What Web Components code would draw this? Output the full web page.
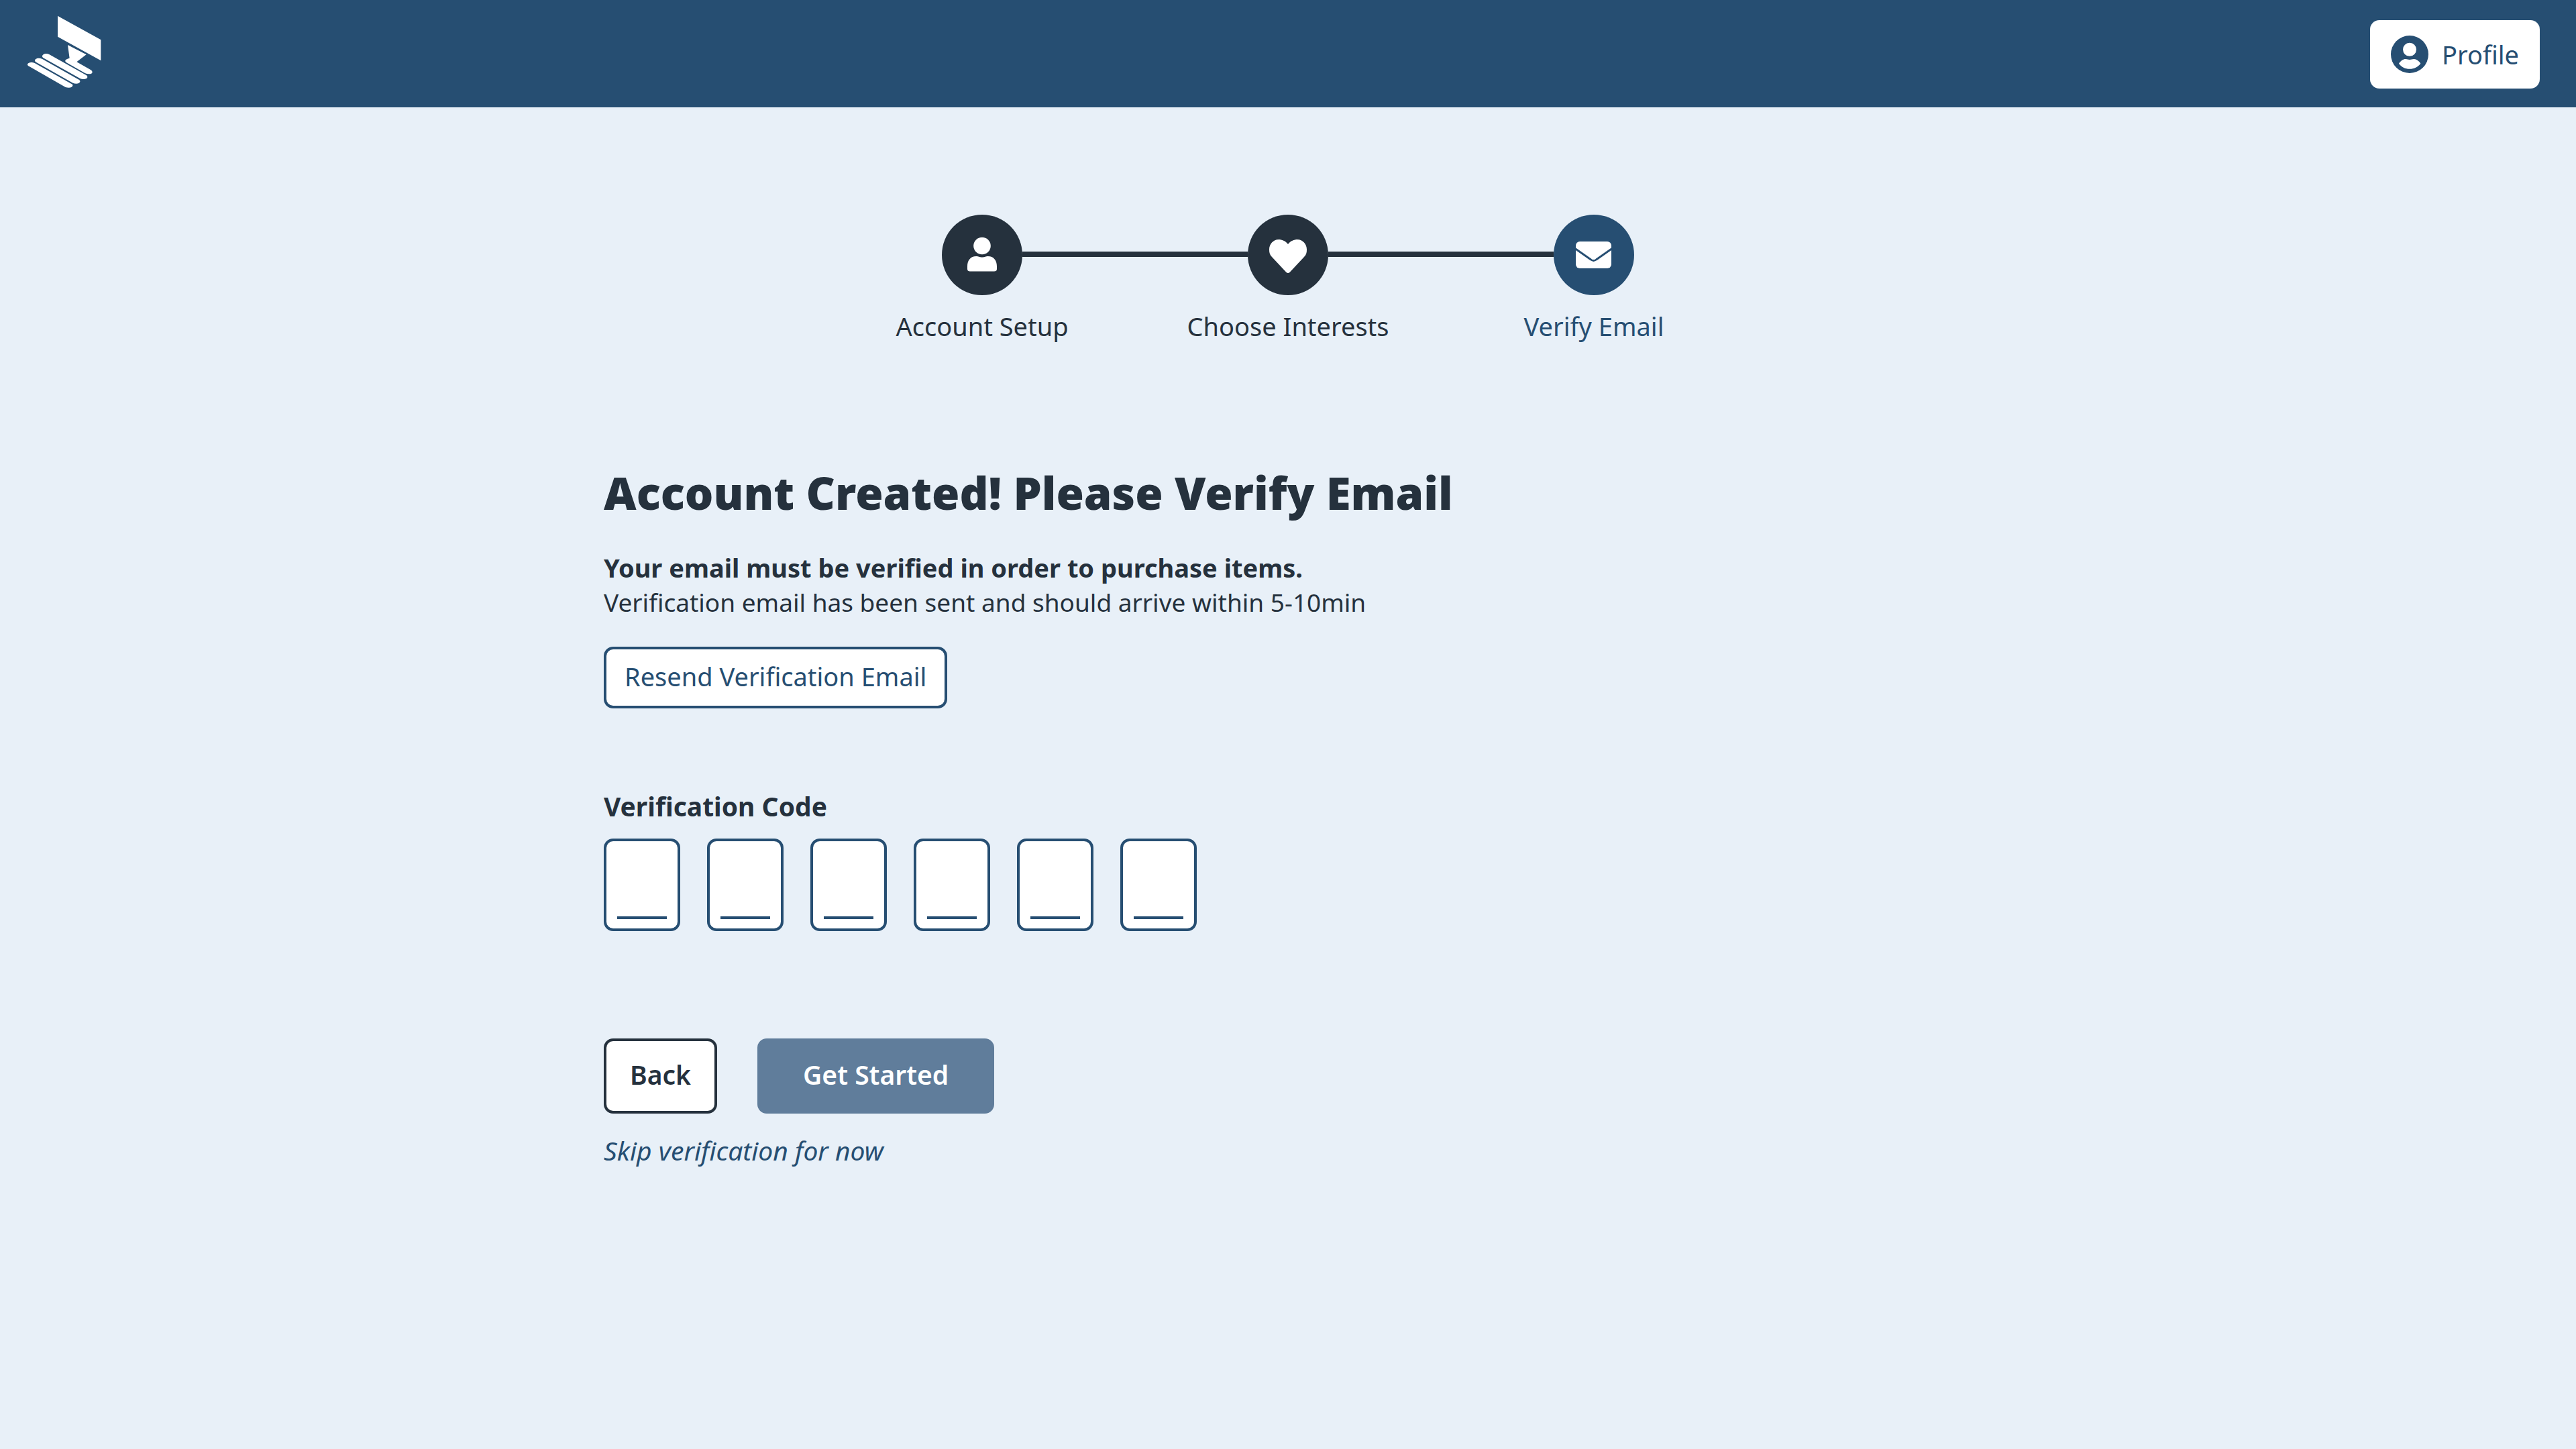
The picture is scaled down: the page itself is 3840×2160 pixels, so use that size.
<!DOCTYPE html>
<html lang="en">
<head>
<meta charset="utf-8">
<title>Verify Email</title>
<style>
  :root {
    --blue: #264e72;
    --blue-muted: #607d9b;
    --ink: #25313d;
    --page: #e8f0f8;
    --text: 38px;
    --text-large: 39px;
    --text-line: 52px;
  }
  html, body { margin: 0; min-height: 100vh; background: var(--page); }
  body {
    font: 400 var(--text)/var(--text-line) "Noto Sans", "Open Sans", sans-serif;
    color: var(--ink);
  }
</style>
</head>
<body>
<verify-page></verify-page>

<script>
const define = (name, html, init) => {
  const template = document.createElement('template');
  template.innerHTML = html;
  customElements.define(name, class extends HTMLElement {
    constructor() {
      super();
      this.attachShadow({ mode: 'open' }).append(template.content.cloneNode(true));
    }
    connectedCallback() { if (init) init(this, this.shadowRoot); }
  });
};

define('brand-logo', `
  <style>
    :host { display: block; }
    a { display: block; color: #fff; }
    svg { display: block; width: 110px; height: 116px; fill: currentColor; }
  </style>
  <a href="#" aria-label="Home">
    <svg viewBox="123 69 330 348" aria-hidden="true">
      <path d="M258 71 451 178V271L258 164Z"/>
      <path d="M303 201 386 244 343 277 405 312Q414 317 413 323Q411 331 398 331Q388 331 380 327L296 279Q290 275 292 270Q295 264 311 260Z"/>
      <path d="M192 258Q188 254 189 250Q192 241 206 240Q214 240 221 244L387 337Q392 341 391 346Q388 354 374 354Q365 354 358 351Z"/>
      <path d="M159 277Q155 273 156 269Q159 261 172 260Q181 260 188 263L354 357Q359 361 358 365Q355 374 341 374Q333 374 326 371Z"/>
      <path d="M127 295Q122 291 123 287Q127 279 140 279Q148 279 155 282L321 376Q326 379 325 383Q322 392 308 392Q300 392 293 390Z"/>
    </svg>
  </a>`);

define('profile-button', `
  <style>
    :host { display: block; }
    button {
      display: flex; align-items: center; gap: 20px; height: 102px; padding: 0 31px;
      border: 0; border-radius: 14px; background: #fff; color: var(--blue);
      font: inherit; cursor: pointer;
    }
    svg { display: block; width: 56px; height: 56px; }
  </style>
  <button type="button">
    <svg viewBox="192 156 168 168" aria-hidden="true">
      <circle cx="276" cy="240" r="84" fill="currentColor"/>
      <g fill="#fff">
        <circle cx="276" cy="218.500" r="30"/>
        <path d="M228 281C236 269 248 261 258 261C266 261 268 264 276 264C284 264 286 261 296 261C306 261 318 270 325 281C312 297 296 305 276 305C256 305 240 297 228 281Z"/>
      </g>
    </svg>
    <slot></slot>
  </button>`);

define('site-header', `
  <style>
    :host {
      display: flex; align-items: center; justify-content: space-between;
      box-sizing: border-box; height: 160px; padding: 2px 54px 0 41px;
      background: var(--blue);
    }
  </style>
  <brand-logo></brand-logo>
  <profile-button>Profile</profile-button>`);

define('progress-step', `
  <style>
    :host {
      display: flex; flex-direction: column; align-items: center; gap: 20px;
      width: 120px; color: var(--ink);
    }
    :host([current]) { color: var(--blue); }
    .disc { width: 120px; height: 120px; border-radius: 50%; background: currentColor; }
    span { white-space: nowrap; }
  </style>
  <div class="disc"><slot name="icon"></slot></div>
  <span><slot></slot></span>`);

define('progress-steps', `
  <style>
    :host { display: flex; justify-content: center; align-items: flex-start; }
    .link { width: 336px; height: 8px; margin-top: 55px; background: var(--ink); }
    svg { display: block; width: 120px; height: 120px; fill: #fff; }
  </style>
  <progress-step>
    <svg slot="icon" viewBox="0 0 120 120" aria-hidden="true">
      <circle cx="60" cy="46.500" r="12.800"/>
      <path d="M38 77C38 68 43 62 51 62C55 62 56 63.500 60 63.500C64 63.500 65 62 69 62C77 62 82 68 82 77V81Q82 84.600 78 84.600H42Q38 84.600 38 81Z"/>
    </svg>Account Setup
  </progress-step>
  <div class="link"></div>
  <progress-step>
    <svg slot="icon" viewBox="0 0 120 120" aria-hidden="true">
      <path d="M60 44C56 39 51 37 46 37C38 37 32 44 32 52C32 57 33 60 36 63L57.500 86Q60 88 62.500 86L84 63C87 60 88 57 88 52C88 44 82 37 74 37C69 37 64 39 60 44Z"/>
    </svg>Choose Interests
  </progress-step>
  <div class="link"></div>
  <progress-step current>
    <svg slot="icon" viewBox="0 0 120 120" aria-hidden="true">
      <rect x="33" y="40" width="53" height="40" rx="6"/>
      <path d="M32 50.500 55.500 67Q59.500 70 63.500 67L87 50.500" fill="none" stroke="var(--blue)" stroke-width="2.800"/>
    </svg>Verify Email
  </progress-step>`);

define('app-button', `
  <style>
    :host { display: block; --pad: 35px; --height: 112px; --tone: var(--ink); }
    :host([kind="link-outline"]) { --pad: 27px; --height: 92px; --tone: var(--blue); }
    :host([kind="primary"]) { --pad: 64px; }
    button {
      display: flex; align-items: center; justify-content: center;
      box-sizing: border-box; height: var(--height); padding: 0 var(--pad) 5px;
      border: 4px solid var(--tone); border-radius: 14px;
      background: #fff; color: var(--tone); font: inherit; white-space: nowrap;
    }
    :host([kind="primary"]) button {
      border-color: var(--blue-muted); background: var(--blue-muted); color: #fff;
    }
  </style>
  <button type="button"><slot></slot></button>`,
  (host, root) => { root.querySelector('button').disabled = host.hasAttribute('disabled'); });

define('code-input', `
  <style>
    :host { display: block; }
    label { display: block; margin-bottom: 22px; font-size: var(--text-large); font-weight: 700; }
    .cells { display: flex; gap: 40px; }
    input {
      box-sizing: border-box; width: 114px; height: 138px; margin: 0; padding: 0 0 12px;
      border: 4px solid var(--blue); border-radius: 14px; outline: 0;
      background: linear-gradient(var(--blue), var(--blue)) center bottom 14px / 74px 4px no-repeat #fff;
      color: var(--ink); font: inherit; text-align: center;
    }
  </style>
  <label for="digit-1"><slot></slot></label>
  <div class="cells"></div>`,
  (host, root) => {
    const cells = root.querySelector('.cells');
    for (let i = 1; i <= 6; i++) {
      const input = document.createElement('input');
      input.id = 'digit-' + i;
      input.type = 'text';
      input.maxLength = 1;
      input.inputMode = 'numeric';
      if (i > 1) input.setAttribute('aria-label', 'Digit ' + i);
      input.addEventListener('input', () => {
        if (input.value && input.nextElementSibling) input.nextElementSibling.focus();
      });
      cells.append(input);
    }
  });

define('verify-form', `
  <style>
    :host { display: flex; flex-direction: column; align-items: flex-start; }
    h1 { margin: 0 0 44px; font-size: 67px; line-height: 84px; font-weight: 900; }
    p { margin: 0; }
    .lead { font-weight: 700; }
    .note { font-size: 37px; margin-bottom: 40px; }
    code-input { margin: 120px 0 160px; }
    .actions {
      display: flex; gap: 60px; margin-bottom: 29px;
      font-size: var(--text-large); font-weight: 600;
    }
    a {
      color: var(--blue); font-size: var(--text-large); font-style: italic;
      text-decoration: none;
    }
  </style>
  <h1>Account Created! Please Verify Email</h1>
  <p class="lead">Your email must be verified in order to purchase items.</p>
  <p class="note">Verification email has been sent and should arrive within 5-10min</p>
  <app-button kind="link-outline">Resend Verification Email</app-button>
  <code-input>Verification Code</code-input>
  <div class="actions">
    <app-button>Back</app-button>
    <app-button kind="primary" disabled>Get Started</app-button>
  </div>
  <a href="#">Skip verification for now</a>`);

define('verify-page', `
  <style>
    :host { display: block; }
    main { box-sizing: border-box; max-width: 2040px; margin: 0 auto; padding: 160px 0; }
    verify-form { margin-top: 180px; }
  </style>
  <site-header></site-header>
  <main>
    <progress-steps></progress-steps>
    <verify-form></verify-form>
  </main>`);
</script>
</body>
</html>
